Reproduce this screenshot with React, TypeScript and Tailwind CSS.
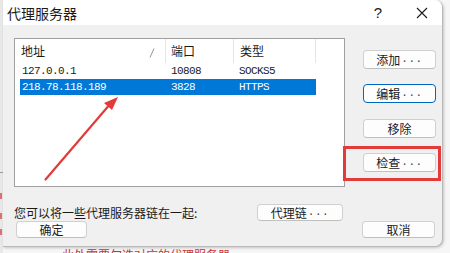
import React from "react";

const cjk = { fontFamily: '"Noto Sans CJK SC", "Noto Sans", sans-serif' };
const mono = { fontFamily: '"Liberation Mono", "DejaVu Sans Mono", monospace' };

function Btn({
  label,
  dots,
  className,
  focused,
}: {
  label: string;
  dots?: boolean;
  className: string;
  focused?: boolean;
}) {
  return (
    <div
      className={
        "flex items-center justify-center rounded-[4px] bg-[#fdfdfd] text-[12px] leading-none text-[#1a1a1a] " +
        (focused ? "border border-[#0067c0] shadow-[inset_0_0_0_1px_#ffffff]" : "border border-[#d0d0d0] border-b-[#c0c0c0]") +
        " " +
        className
      }
      style={cjk}
    >
      <span>{label}</span>
      {dots && (
        <span className="ml-[1px] text-[11px] tracking-[0.5px] text-[#404040]" style={mono}>
          ...
        </span>
      )}
    </div>
  );
}

export default function App() {
  return (
    <div className="relative h-[253px] w-[450px] overflow-hidden bg-[#f6f6f6]">
      {/* background strips */}
      <div className="absolute left-0 top-0 h-[253px] w-[3px] bg-[#e8e8e8]">
        <div className="mt-[172px] h-[1px] w-full bg-[#9a9a9a]" />
        <div className="mt-[20px] h-[6px] w-[2px] bg-[#e07070]" />
        <div className="mt-[14px] h-[6px] w-[2px] bg-[#e07070]" />
        <div className="mt-[10px] h-[6px] w-[2px] bg-[#e07070]" />
      </div>
      <div className="absolute left-[62px] top-[249px] whitespace-nowrap text-[12px] leading-none text-[#d03030]" style={cjk}>
        此处需要勾选对应的代理服务器
      </div>

      {/* window */}
      <div className="absolute left-[3px] top-0 flex h-[247px] w-[440px] flex-col overflow-hidden rounded-br-[8px] rounded-tr-[8px] border-r border-b border-[#b8b8b8] bg-[#f0f0f0] shadow-[1px_1px_3px_rgba(0,0,0,0.2)]">
        <div className="flex h-[25px] shrink-0 items-center bg-white pl-[4px]">
          <span className="text-[14px] leading-none text-[#1a1a1a]" style={cjk}>
            代理服务器
          </span>
          <span className="ml-auto mr-[34px] text-[15px] leading-none text-[#1a1a1a]" style={{ fontFamily: '"Liberation Sans", sans-serif' }}>
            ?
          </span>
          <svg width="12" height="12" viewBox="0 0 12 12" className="mr-[14px]">
            <path d="M1 1 L11 11 M11 1 L1 11" stroke="#1a1a1a" strokeWidth="1.1" />
          </svg>
        </div>

        <div className="flex flex-1 flex-col">
          <div className="flex pl-[11px] pt-[13px]">
            {/* list */}
            <div className="h-[149px] w-[331px] border border-[#a0a0a0] bg-white">
              <div className="flex h-[24px] items-center pl-[5px] text-[12px] text-[#1a1a1a]" style={cjk}>
                <div className="relative flex h-full w-[146px] items-center border-r border-[#e5e5e5]">
                  <span className="ml-[1px]">地址</span>
                  <svg width="6" height="10" viewBox="0 0 6 10" className="absolute left-[129px] top-[9px]">
                    <path d="M5 0.5 L1 9.5" stroke="#8a8a8a" strokeWidth="0.9" />
                  </svg>
                </div>
                <div className="flex h-full w-[68px] items-center border-r border-[#e5e5e5] pl-[5px]">端口</div>
                <div className="flex h-full w-[82px] items-center border-r border-[#e5e5e5] pl-[6px]">类型</div>
              </div>
              <div className="ml-[5px] w-[296px] text-[11px] leading-none tracking-[-0.6px]" style={mono}>
                <div className="flex h-[16px] items-center text-[#1a1a1a]">
                  <span className="w-[151px] pl-[2px]">127.0.0.1</span>
                  <span className="w-[68px]">10808</span>
                  <span>SOCKS5</span>
                </div>
                <div className="flex h-[16px] items-center bg-[#0078d7] text-white">
                  <span className="w-[151px] pl-[2px]">218.78.118.189</span>
                  <span className="w-[68px]">3828</span>
                  <span>HTTPS</span>
                </div>
              </div>
            </div>

            {/* buttons */}
            <div className="ml-[18px] flex w-[73px] flex-col">
              <Btn label="添加" dots className="mt-[12px] h-[19px]" />
              <Btn label="编辑" dots focused className="mt-[15px] h-[19px]" />
              <Btn label="移除" className="mt-[16px] h-[19px]" />
              <Btn label="检查" dots className="mt-[15px] h-[19px]" />
            </div>
          </div>

          <div className="mt-[17px] flex h-[17px] items-center justify-between pl-[11px] pr-[99px]">
            <span className="text-[12px] leading-none text-[#1a1a1a]" style={cjk}>
              您可以将一些代理服务器链在一起:
            </span>
            <Btn label="代理链" dots className="h-[17px] w-[86px]" />
          </div>

          <div className="flex items-center justify-between pl-[13px] pr-[7px]">
            <Btn label="确定" className="h-[17px] w-[71px]" />
            <Btn label="取消" className="h-[17px] w-[73px]" />
          </div>
        </div>
      </div>

      {/* annotations */}
      <div className="absolute left-[343px] top-[146px] h-[35px] w-[98px] border-[3px] border-[#e53a3a]" />
      <svg className="absolute left-0 top-0" width="450" height="253" viewBox="0 0 450 253">
        <path d="M45.5 179.5 L108 106.5" stroke="#e53a3a" strokeWidth="2.2" strokeLinecap="round" />
        <polygon points="118,97 104,103 112,110" fill="#e53a3a" />
      </svg>
    </div>
  );
}
